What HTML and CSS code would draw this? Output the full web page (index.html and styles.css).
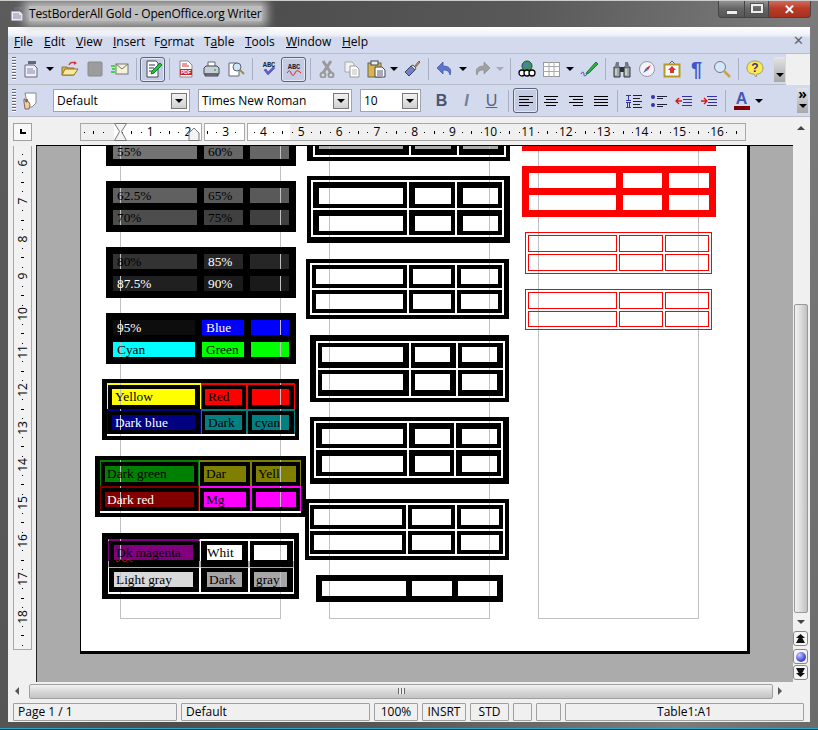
FILE: index.html
```html
<!DOCTYPE html>
<html lang="en">
<head>
    <meta charset="UTF-8">
    <title>TestBorderAll Gold - OpenOffice.org Writer</title>
    <link rel="stylesheet" href="styles.css">
</head>
<body>
<div class="win">
    <!-- title bar -->
    <div class="titlebar">
        <svg class="ticon" width="18" height="18" viewBox="0 0 18 18"><path d="M6 2h8v3H6z" fill="#667"/><path d="M3 6h9l3 3v7H3z" fill="#eef" stroke="#667"/><path d="M5 9h6M5 11h8M5 13h8" stroke="#889"/></svg>
        <span class="ttext">TestBorderAll Gold - OpenOffice.org Writer</span>
        <div class="wbtns">
            <div class="wbtn wmin"><i></i></div>
            <div class="wbtn wmax"><i></i></div>
            <div class="wbtn wclose">✕</div>
        </div>
    </div>

    <div class="client">
        <!-- menu -->
        <div class="menubar">
            <span class="mi w-file"><u>F</u>ile</span>
            <span class="mi w-edit"><u>E</u>dit</span>
            <span class="mi w-view"><u>V</u>iew</span>
            <span class="mi w-insert"><u>I</u>nsert</span>
            <span class="mi w-format">F<u>o</u>rmat</span>
            <span class="mi w-table">T<u>a</u>ble</span>
            <span class="mi w-tools"><u>T</u>ools</span>
            <span class="mi w-window"><u>W</u>indow</span>
            <span class="mi"><u>H</u>elp</span>
            <span class="mclose">✕</span>
        </div>

        <!-- standard toolbar -->
        <div class="toolbar tb1">
            <i class="handle"></i>
            <div class="tb tb-first"><svg width="18" height="18" viewBox="0 0 18 18"><path d="M6 1h8v3H6z" fill="#667"/><path d="M3 5h9l3 3v9H3z" fill="#eef" stroke="#667"/><path d="M5 9h6M5 11h8M5 13h8" stroke="#889"/></svg></div>
            <i class="dd d14"></i>
            <div class="tb"><svg width="18" height="18" viewBox="0 0 18 18"><path d="M1 7h5l1 1h6v7H1z" fill="#d9b64a" stroke="#8a7430"/><path d="M1 15l3-6h13l-4 6z" fill="#fbe99a" stroke="#8a7430"/><path d="M8 5c1-3 4-3 6-2" fill="none" stroke="#d33" stroke-width="1.4"/><path d="M13 1l3 2-3 2z" fill="#d33"/></svg></div>
            <div class="tb"><svg width="18" height="18" viewBox="0 0 18 18"><rect x="2" y="2" width="14" height="14" rx="1" fill="#9c9c9c" stroke="#8a8a8a"/></svg></div>
            <div class="tb"><svg width="18" height="18" viewBox="0 0 18 18"><rect x="5" y="4" width="12" height="10" fill="#f6f2d8" stroke="#777"/><path d="M5 4l6 5 6-5" fill="none" stroke="#777"/><path d="M0 6h4M1 9h3M0 12h4" stroke="#2c2" stroke-width="1.5"/></svg></div>
            <i class="sep"></i>
            <div class="tb on"><svg width="18" height="18" viewBox="0 0 18 18"><path d="M3 1h9l2 2v14H3z" fill="#fff" stroke="#445"/><path d="M5 5h6M5 8h5M5 11h3" stroke="#335"/><path d="M7 14l1-3 8-8 2 2-8 8z" fill="#2c2" stroke="#174"/></svg></div>
            <i class="sep"></i>
            <div class="tb"><svg width="18" height="18" viewBox="0 0 18 18"><path d="M3 1h8l4 4v12H3z" fill="#fff" stroke="#888"/><path d="M5 4h5M5 6h7" stroke="#d33"/><rect x="3" y="9" width="12" height="6" fill="#c22"/><text x="9" y="14" text-anchor="middle" class="svgt pdf">PDF</text></svg></div>
            <div class="tb"><svg width="18" height="18" viewBox="0 0 18 18"><path d="M6 2h7v5H6z" fill="#fff" stroke="#667"/><path d="M2 8l2-2h11l2 2v6H2z" fill="#c9ced8" stroke="#445"/><path d="M3 14h13v2H3z" fill="#889" stroke="#445"/><circle cx="13" cy="10" r="1" fill="#2c2"/></svg></div>
            <div class="tb"><svg width="18" height="18" viewBox="0 0 18 18"><path d="M2 3h8l2 2v11H2z" fill="#fff" stroke="#667"/><circle cx="10" cy="7" r="4" fill="#cfe4f7" stroke="#567"/><path d="M13 10l4 4" stroke="#a84" stroke-width="2"/></svg></div>
            <i class="sep"></i>
            <div class="tb"><svg width="18" height="18" viewBox="0 0 18 18"><text x="9" y="7" text-anchor="middle" class="svgt abc">ABC</text><path d="M4 10l4 5 7-7-2-1-5 5-2-3z" fill="#5a62cc" stroke="#3a3f99" stroke-width=".5"/></svg></div>
            <div class="tb on"><svg width="18" height="18" viewBox="0 0 18 18"><text x="9" y="9" text-anchor="middle" class="svgt abc">ABC</text><path d="M2 13c2-3 3-3 4 0s3 3 4 0 3-3 6 0" fill="none" stroke="#d22"/></svg></div>
            <i class="sep"></i>
            <div class="tb"><svg width="18" height="18" viewBox="0 0 18 18"><path d="M5 1l8 12M13 1L5 13" stroke="#9a9a9a" stroke-width="3"/><circle cx="5" cy="15" r="2.500" fill="none" stroke="#9a9a9a" stroke-width="2"/><circle cx="13" cy="15" r="2.500" fill="none" stroke="#9a9a9a" stroke-width="2"/></svg></div>
            <div class="tb"><svg width="18" height="18" viewBox="0 0 18 18"><path d="M2 2h7l2 2v8H2z" fill="#f2f2f2" stroke="#aaa"/><path d="M7 6h6l3 3v8H7z" fill="#fff" stroke="#999"/><path d="M9 10h5M9 12h5M9 14h5" stroke="#bbb"/></svg></div>
            <div class="tb"><svg width="20" height="18" viewBox="0 0 20 18"><rect x="1" y="3" width="13" height="14" fill="#d9b64a" stroke="#665"/><rect x="4" y="1" width="7" height="4" fill="#eee" stroke="#445"/><path d="M8 7h7l3 3v7H8z" fill="#fff" stroke="#445"/><path d="M10 11h6M10 13h6M10 15h6" stroke="#557"/></svg></div>
            <i class="dd d10"></i>
            <div class="tb"><svg width="18" height="18" viewBox="0 0 18 18"><path d="M11 7l5-6 1 1-5 6z" fill="#c9a24a" stroke="#765"/><path d="M2 12l6-6 4 4-6 6z" fill="#6f7fd0" stroke="#445"/><path d="M8 6l2-1 3 3-1 2z" fill="#ddd" stroke="#555"/></svg></div>
            <i class="sep"></i>
            <div class="tb"><svg width="18" height="18" viewBox="0 0 18 18"><path d="M7 2L1 8l6 6v-4c4 0 6 1 7 5 2-5 0-9-7-9z" fill="#5c74d2" stroke="#3c4c9c" stroke-width=".7"/></svg></div>
            <i class="dd d12"></i>
            <div class="tb"><svg width="18" height="18" viewBox="0 0 18 18"><path d="M11 2l6 6-6 6v-4c-4 0-6 1-7 5-2-5 0-9 7-9z" fill="#a0a0a0" stroke="#8c8c8c" stroke-width=".7"/></svg></div>
            <i class="dd d12 dim"></i>
            <i class="sep"></i>
            <div class="tb"><svg width="18" height="18" viewBox="0 0 18 18"><circle cx="9" cy="6" r="5" fill="#3a9a4a" stroke="#247"/><path d="M6 3l4 1 1 3-3 1z" fill="#57c"/><circle cx="4" cy="13" r="3" fill="#fff" stroke="#000" stroke-width="1.3"/><circle cx="9" cy="13" r="3" fill="#fff" stroke="#000" stroke-width="1.3"/><circle cx="14" cy="13" r="3" fill="#fff" stroke="#000" stroke-width="1.3"/></svg></div>
            <div class="tb"><svg width="17" height="15" viewBox="0 0 17 15"><rect x=".5" y=".5" width="16" height="14" fill="#fff" stroke="#999"/><path d="M0 4.500h17M0 9.500h17M6 0v15M11 0v15" stroke="#aaa"/></svg></div>
            <i class="dd d12"></i>
            <div class="tb"><svg width="18" height="18" viewBox="0 0 18 18"><path d="M1 14c2-4 3-1 3 1s3 0 4-2" fill="none" stroke="#4a3fb0"/><path d="M7 12l9-10 2 2-9 9-3 1z" fill="#2db53c" stroke="#174"/></svg></div>
            <i class="sep"></i>
            <div class="tb"><svg width="18" height="18" viewBox="0 0 18 18"><path d="M2 6l1-4h3v4zM12 6V2h3l1 4z" fill="#778"/><path d="M1 7h6v10H1zM11 7h6v10h-6z" fill="#9aa" stroke="#333"/><rect x="7" y="7" width="4" height="5" fill="#333"/><path d="M3 9v6M13 9v6" stroke="#eee"/></svg></div>
            <div class="tb"><svg width="18" height="18" viewBox="0 0 18 18"><circle cx="9" cy="9" r="7.500" fill="#f4f4f8" stroke="#99a"/><path d="M13 5l-3 5-2-2z" fill="#d22"/><path d="M5 13l3-5 2 2z" fill="#46c"/></svg></div>
            <div class="tb"><svg width="18" height="18" viewBox="0 0 18 18"><path d="M6 4l3-3 3 3" fill="none" stroke="#665"/><rect x="1.500" y="4.500" width="15" height="12" fill="#fff" stroke="#b59a2a" stroke-width="2"/><path d="M5 10l4-4 4 4h-2v3H7v-3z" fill="#d33"/></svg></div>
            <div class="tb"><span class="pil">¶</span></div>
            <div class="tb"><svg width="18" height="18" viewBox="0 0 18 18"><circle cx="7" cy="7" r="5.500" fill="#d5e8fa" stroke="#778"/><path d="M11 11l6 6" stroke="#c9a24a" stroke-width="2.500"/></svg></div>
            <i class="sep"></i>
            <div class="tb"><svg width="18" height="18" viewBox="0 0 18 18"><path d="M9 1c5 0 8 3 8 7s-3 6-6 6l-1 3-2-3c-4 0-7-2-7-6s3-7 8-7z" fill="#ffe94a" stroke="#998"/><text x="9" y="12" text-anchor="middle" class="svgt qm">?</text></svg></div>
            <div class="over over1"><i class="dd d10"></i></div>
        </div>

        <!-- formatting toolbar -->
        <div class="toolbar tb2">
            <i class="handle"></i>
            <div class="tb tb-style"><svg width="18" height="18" viewBox="0 0 18 18"><path d="M4 1h11v10l-4 4H7z" fill="#fff" stroke="#888"/><path d="M3 10V7h1l1 3h1V7l1 3 1 0 1 3-1 4H4z" fill="#f2c9a0" stroke="#543" stroke-width=".7"/></svg></div>
            <div class="combo c-style"><span>Default</span><b class="cbtn"></b></div>
            <div class="combo c-font"><span>Times New Roman</span><b class="cbtn"></b></div>
            <div class="combo c-size"><span>10</span><b class="cbtn"></b></div>
            <div class="tb fmt fb">B</div>
            <div class="tb fmt fi">I</div>
            <div class="tb fmt fu">U</div>
            <i class="sep"></i>
            <div class="tb on al-first"><svg width="18" height="12" viewBox="0 0 18 12"><path d="M2 1.500h14M2 4.500h10M2 7.500h14M2 10.500h10" stroke="#000"/></svg></div>
            <div class="tb"><svg width="18" height="12" viewBox="0 0 18 12"><path d="M2 1.500h14M4 4.500h10M2 7.500h14M4 10.500h10" stroke="#000"/></svg></div>
            <div class="tb"><svg width="18" height="12" viewBox="0 0 18 12"><path d="M2 1.500h14M6 4.500h10M2 7.500h14M6 10.500h10" stroke="#000"/></svg></div>
            <div class="tb"><svg width="18" height="12" viewBox="0 0 18 12"><path d="M2 1.500h14M2 4.500h14M2 7.500h14M2 10.500h14" stroke="#000"/></svg></div>
            <i class="sep"></i>
            <div class="tb"><svg width="18" height="14" viewBox="0 0 18 14"><path d="M1 1.500h5M3.500 1v5M1 6.500h5M1 8.500h5M2.500 8v5M4.500 8v5M1 13.500h5" stroke="#33a"/><path d="M8 1.500h9M8 4.500h7M8 7.500h9M8 10.500h7M8 13.500h9" stroke="#223"/></svg></div>
            <div class="tb"><svg width="18" height="12" viewBox="0 0 18 12"><circle cx="3" cy="2" r="2" fill="#33a"/><circle cx="3" cy="10" r="2" fill="#33a"/><path d="M7 1.500h10M7 3.500h6M7 9.500h10M7 11.500h6" stroke="#223"/></svg></div>
            <div class="tb"><svg width="18" height="14" viewBox="0 0 18 14"><path d="M7 7H1M4 4L1 7l3 3" fill="none" stroke="#d11" stroke-width="1.300"/><path d="M7 2.500h10M8 5.500h9M8 8.500h9M7 11.500h10" stroke="#339"/></svg></div>
            <div class="tb"><svg width="18" height="14" viewBox="0 0 18 14"><path d="M1 7h6M4 4l3 3-3 3" fill="none" stroke="#d11" stroke-width="1.300"/><path d="M7 2.500h10M8 5.500h9M8 8.500h9M7 11.500h10" stroke="#339"/></svg></div>
            <i class="sep"></i>
            <div class="tb fcol"><span class="fa">A</span><i class="fbar"></i></div>
            <i class="dd d10"></i>
            <div class="over over2"><span class="chev">»</span><i class="dd d10"></i></div>
        </div>

        <!-- ruler + document + scrollbar -->
        <div class="editor">
            <div class="rulerrow">
                <div class="tabcorner"><i></i></div>
                <div class="hruler">
                    <div class="track">
                        <span class="u"></span><span class="u"></span>
                        <span class="u"><b>1</b></span><span class="u"><b>2</b></span><span class="u"><b>3</b></span><span class="u"><b>4</b></span>
                        <span class="u"><b>5</b></span><span class="u"><b>6</b></span><span class="u"><b>7</b></span><span class="u"><b>8</b></span>
                        <span class="u"><b>9</b></span><span class="u"><b>10</b></span><span class="u"><b>11</b></span><span class="u"><b>12</b></span>
                        <span class="u"><b>13</b></span><span class="u"><b>14</b></span><span class="u"><b>15</b></span><span class="u"><b>16</b></span>
                    </div>
                    <svg class="hour" width="14" height="18" viewBox="0 0 14 18"><path d="M.5.500h12L7.500 8.500l5 9H.5l5-9z" fill="#f4f4f4" stroke="#777"/></svg>
                    <svg class="tri" width="12" height="18" viewBox="0 0 12 18"><path d="M1 17.500V10l5-5 5 5v7.500z" fill="#f4f4f4" stroke="#777"/></svg>
                    <i class="colsep cs1"></i><i class="colsep cs2"></i>
                </div>
            </div>
            <div class="vscroll">
                <i class="arr up"></i>
                <div class="vthumb"></div>
                <i class="arr down"></i>
                <div class="nav"><i class="na nup"></i></div>
                <div class="nav"><i class="ball"></i></div>
                <div class="nav"><i class="na ndown"></i></div>
            </div>
            <div class="leftpane">
                <div class="vruler">
                    <span class="v"></span><span class="v"><b>6</b></span><span class="v"><b>7</b></span><span class="v"><b>8</b></span>
                    <span class="v"><b>9</b></span><span class="v"><b>10</b></span><span class="v"><b>11</b></span><span class="v"><b>12</b></span>
                    <span class="v"><b>13</b></span><span class="v"><b>14</b></span><span class="v"><b>15</b></span><span class="v"><b>16</b></span>
                    <span class="v"><b>17</b></span><span class="v"><b>18</b></span>
                </div>
            </div>
            <div class="doc">
                <div class="page">

                    <!-- left column: coloured cells -->
                    <div class="col col1">
                        <i class="guide"></i>
                        <div class="tbl shade t1">
                            <div class="grid">
                                <div class="cell g55"><span class="txt">55%</span></div>
                                <div class="cell g60"><span class="txt">60%</span></div>
                                <div class="cell g60"></div>
                            </div>
                        </div>
                        <div class="tbl shade t1">
                            <div class="grid">
                                <div class="cell g62"><span class="txt">62.5%</span></div>
                                <div class="cell g65"><span class="txt">65%</span></div>
                                <div class="cell g65"></div>
                                <div class="cell g70"><span class="txt">70%</span></div>
                                <div class="cell g75"><span class="txt">75%</span></div>
                                <div class="cell g75"></div>
                            </div>
                        </div>
                        <div class="tbl shade t1">
                            <div class="grid">
                                <div class="cell g80"><span class="txt">80%</span></div>
                                <div class="cell g85 lt"><span class="txt">85%</span></div>
                                <div class="cell g85"></div>
                                <div class="cell g87 lt"><span class="txt">87.5%</span></div>
                                <div class="cell g90 lt"><span class="txt">90%</span></div>
                                <div class="cell g90"></div>
                            </div>
                        </div>
                        <div class="tbl shade t4">
                            <div class="grid">
                                <div class="cell g95 lt"><span class="txt">95%</span></div>
                                <div class="cell blue lt"><span class="txt">Blue</span></div>
                                <div class="cell blue"></div>
                                <div class="cell cyan"><span class="txt">Cyan</span></div>
                                <div class="cell green"><span class="txt">Green</span></div>
                                <div class="cell green"></div>
                            </div>
                        </div>
                        <div class="tbl edged t5">
                            <div class="grid">
                                <div class="cell yellow"><span class="txt">Yellow</span></div>
                                <div class="cell red"><span class="txt">Red</span></div>
                                <div class="cell red"></div>
                                <div class="cell navy lt"><span class="txt">Dark blue</span></div>
                                <div class="cell teal"><span class="txt">Dark</span></div>
                                <div class="cell teal"><span class="txt">cyan</span></div>
                            </div>
                        </div>
                        <div class="tbl edged t6">
                            <div class="grid">
                                <div class="cell dgreen"><span class="txt">Dark green</span></div>
                                <div class="cell olive"><span class="txt">Dar</span></div>
                                <div class="cell olive"><span class="txt">Yell</span></div>
                                <div class="cell dred lt"><span class="txt">Dark red</span></div>
                                <div class="cell mag"><span class="txt">Mg</span></div>
                                <div class="cell mag"></div>
                            </div>
                        </div>
                        <div class="tbl edged t7">
                            <div class="grid">
                                <div class="cell purple band"><span class="txt"><em class="squig">Dk</em> magenta</span></div>
                                <div class="cell white band"><span class="txt">Whit</span></div>
                                <div class="cell white band"></div>
                                <div class="cell lgray low"><span class="txt">Light gray</span></div>
                                <div class="cell dgray low"><span class="txt">Dark</span></div>
                                <div class="cell dgray low"><span class="txt">gray</span></div>
                            </div>
                        </div>
                    </div>

                    <!-- middle column: black borders -->
                    <div class="col col2">
                        <i class="guide"></i>
                        <div class="tbl framed m1">
                            <div class="grid">
                                <div class="cell fill"></div><div class="cell fill"></div><div class="cell fill"></div>
                            </div>
                        </div>
                        <div class="tbl framed m2"><div class="grid">
                            <div class="cell"></div><div class="cell"></div><div class="cell"></div>
                            <div class="cell"></div><div class="cell"></div><div class="cell"></div>
                        </div></div>
                        <div class="tbl framed m3 plus1"><div class="grid">
                            <div class="cell"></div><div class="cell"></div><div class="cell"></div>
                            <div class="cell"></div><div class="cell"></div><div class="cell"></div>
                        </div></div>
                        <div class="tbl framed m4 plus1"><div class="grid">
                            <div class="cell"></div><div class="cell"></div><div class="cell"></div>
                            <div class="cell"></div><div class="cell"></div><div class="cell"></div>
                        </div></div>
                        <div class="tbl framed m5"><div class="grid">
                            <div class="cell"></div><div class="cell"></div><div class="cell"></div>
                            <div class="cell"></div><div class="cell"></div><div class="cell"></div>
                        </div></div>
                        <div class="tbl framed m6"><div class="grid">
                            <div class="cell"></div><div class="cell"></div><div class="cell"></div>
                            <div class="cell"></div><div class="cell"></div><div class="cell"></div>
                        </div></div>
                        <div class="tbl m7"><div class="grid">
                            <div class="cell"></div><div class="cell"></div><div class="cell"></div>
                        </div></div>
                    </div>

                    <!-- right column: red borders -->
                    <div class="col col3">
                        <i class="guide"></i>
                        <div class="tbl rthick"><div class="grid">
                            <div class="cell"></div><div class="cell"></div><div class="cell"></div>
                            <div class="cell"></div><div class="cell"></div><div class="cell"></div>
                        </div></div>
                        <div class="tbl rthick"><div class="grid">
                            <div class="cell"></div><div class="cell"></div><div class="cell"></div>
                            <div class="cell"></div><div class="cell"></div><div class="cell"></div>
                        </div></div>
                        <div class="tbl framed rthin"><div class="grid">
                            <div class="cell"></div><div class="cell"></div><div class="cell"></div>
                            <div class="cell"></div><div class="cell"></div><div class="cell"></div>
                        </div></div>
                        <div class="tbl framed rthin r4"><div class="grid">
                            <div class="cell"></div><div class="cell"></div><div class="cell"></div>
                            <div class="cell"></div><div class="cell"></div><div class="cell"></div>
                        </div></div>
                    </div>
                </div>
            </div>
        </div>

        <!-- horizontal scrollbar -->
        <div class="hscroll">
            <i class="arr left"></i>
            <div class="hthumb"><span class="grip"></span></div>
            <i class="arr right"></i>
        </div>

        <!-- status bar -->
        <div class="status">
            <div class="sb s1">Page 1 / 1</div>
            <div class="sb s2">Default</div>
            <div class="sb s3 ctr">100%</div>
            <div class="sb s4 ctr">INSRT</div>
            <div class="sb s5 ctr">STD</div>
            <div class="sb s6"></div>
            <div class="sb s7"></div>
            <div class="sb s8 ctr">Table1:A1</div>
        </div>
    </div>
</div>
</body>
</html>
```

FILE: styles.css
```css
html, body {
    margin: 0;
    padding: 0;
    background: #555;
}
body {
    font-family: "Open Sans", "Noto Sans", sans-serif;
    font-size: 12px;
    color: #000;
    overflow: hidden;
}
i, em {
    font-style: normal;
}

/* window frame */
.win {
    width: 818px;
    height: 730px;
    box-sizing: border-box;
    display: flex;
    flex-direction: column;
    padding: 0 8px 8px;
    background: linear-gradient(100deg, #5c5c5c 0%, #4e4e4e 30%, #585858 55%, #7c7c7c 85%, #6a6a6a 100%);
    border-top: 1px solid #ccc;
    box-shadow: inset 0 -1px 0 #333, inset 0 -2px 0 #2aa6c8;
    overflow: hidden;
}
.titlebar {
    height: 26px;
    flex: none;
    display: flex;
    align-items: center;
    position: relative;
}
.ticon {
    margin: 0 3px 0 0;
}
.ttext {
    font-size: 12px;
    color: #000;
    background: #bdbdbd;
    box-shadow: 0 0 10px 5px #bdbdbd;
    line-height: 15px;
    letter-spacing: -.15px;
    margin-top: -2px;
}
.wbtns {
    position: absolute;
    right: -1px;
    top: -1px;
    display: flex;
    height: 18px;
}
.wbtn {
    height: 17px;
    border: 1px solid #444;
    border-top: 0;
    box-sizing: content-box;
    display: flex;
    align-items: center;
    justify-content: center;
}
.wmin {
    width: 25px;
    border-radius: 0 0 0 4px;
    background: linear-gradient(#999, #666 50%, #555);
}
.wmin i {
    width: 10px;
    height: 3px;
    margin-top: 7px;
    background: #eee;
    border: 1px solid #555;
}
.wmax {
    width: 23px;
    border-left: 0;
    background: linear-gradient(#999, #666 50%, #555);
}
.wmax i {
    width: 8px;
    height: 5px;
    border: 2px solid #eee;
    outline: 1px solid #555;
}
.wclose {
    width: 41px;
    border-left: 0;
    border-radius: 0 0 4px 0;
    color: #fff;
    font-size: 13px;
    font-weight: 700;
    background: linear-gradient(#d87060, #b83c28 50%, #a83020);
}

.client {
    flex: 1;
    display: flex;
    flex-direction: column;
    min-height: 0;
    background: #f0f0f0;
}

/* menu */
.menubar {
    height: 27px;
    flex: none;
    box-sizing: border-box;
    display: flex;
    align-items: center;
    padding: 3px 6px 0;
    background: linear-gradient(#fff 0, #eef1f8 8px, #d3daee 11px);
    border-bottom: 1px solid #b8bcc8;
}
.mi {
    font-size: 12px;
    line-height: 16px;
    flex: none;
}
.w-file { width: 30px; }
.w-edit { width: 32px; }
.w-view { width: 37px; }
.w-insert { width: 41px; }
.w-format { width: 50px; }
.w-table { width: 41px; }
.w-tools { width: 41px; }
.w-window { width: 56px; }
.mclose {
    margin-left: auto;
    font-size: 13px;
    color: #666;
    margin-top: -3px;
}

/* toolbars */
.toolbar {
    flex: none;
    display: flex;
    align-items: center;
    box-sizing: border-box;
    padding-left: 4px;
    background: #d3daee;
    border-bottom: 1px solid #b8bcc8;
}
.tb1 {
    height: 31px;
    width: 778px;
}
.tb2 {
    height: 32px;
}
.handle {
    width: 4px;
    height: 24px;
    flex: none;
    background: repeating-linear-gradient(#667 0 1px, #fff 1px 2px, transparent 2px 3px);
}
.tb {
    width: 25px;
    height: 25px;
    flex: none;
    box-sizing: border-box;
    display: flex;
    align-items: center;
    justify-content: center;
}
.tb-first {
    margin-left: 2px;
}
.tb-style {
    margin-left: 1px;
    margin-right: 11px;
}
.tb.on {
    background: #c3cce2;
    border: 1px solid #5b6478;
    border-radius: 3px;
    box-shadow: inset 0 0 0 1px #e4e8f4;
}
.al-first {
    margin-left: 1px;
}
.sep {
    width: 8px;
    height: 22px;
    flex: none;
    background: linear-gradient(#a9b0c4, #a9b0c4) center / 1px 100% no-repeat;
}
.dd {
    display: block;
    flex: none;
    height: 4px;
    position: relative;
}
.dd::before {
    content: "";
    position: absolute;
    left: 50%;
    top: 0;
    margin-left: -4px;
    border: 4px solid transparent;
    border-top: 4px solid #000;
    border-bottom: 0;
}
.dd.dim::before {
    border-top-color: #aaa;
}
.d10 { width: 10px; }
.d12 { width: 12px; }
.d14 { width: 14px; }
.over {
    margin-left: auto;
    width: 11px;
    height: 25px;
    flex: none;
    background: linear-gradient(#e4e4e4, #a8a8a8);
    display: flex;
    flex-direction: column;
    align-items: center;
    justify-content: flex-end;
    padding-bottom: 5px;
    box-sizing: border-box;
}
.over1 {
    margin-right: 1px;
}
.over2 {
    margin-right: 2px;
    justify-content: space-between;
    padding: 0 0 5px;
}
.chev {
    font-size: 14px;
    line-height: 12px;
    font-weight: 700;
}
.svgt {
    font-family: "Liberation Sans", sans-serif;
}
.pdf {
    font-size: 5px;
    font-weight: 700;
    fill: #fff;
}
.abc {
    font-family: "Liberation Mono", monospace;
    font-size: 7px;
    font-weight: 700;
    fill: #223;
}
.qm {
    font-size: 12px;
    font-weight: 700;
    fill: #338;
}
.pil {
    font-family: "Liberation Sans", sans-serif;
    font-size: 20px;
    font-weight: 700;
    color: #3f57c8;
    line-height: 20px;
}
.fmt {
    font-family: "Liberation Sans", sans-serif;
    font-size: 16px;
    color: #4a5470;
}
.fb {
    font-weight: 700;
}
.fi {
    font-style: italic;
    font-weight: 700;
    color: #777f96;
}
.fu {
    text-decoration: underline;
    color: #5a6480;
}
.fcol {
    flex-direction: column;
}
.fa {
    font-family: "Liberation Sans", sans-serif;
    font-weight: 700;
    font-size: 16px;
    line-height: 15px;
    color: #4755b8;
}
.fbar {
    width: 16px;
    height: 4px;
    background: #800000;
}

/* combo boxes */
.combo {
    height: 23px;
    flex: none;
    box-sizing: border-box;
    background: #fff;
    border: 1px solid #a0a4b0;
    display: flex;
    align-items: center;
    margin-right: 8px;
    padding-left: 3px;
}
.combo span {
    flex: 1;
    font-size: 12px;
}
.c-style { width: 137px; }
.c-font { width: 154px; }
.c-size { width: 61px; }
.cbtn {
    width: 16px;
    height: 16px;
    margin-right: 2px;
    box-sizing: border-box;
    background: linear-gradient(#f2f2f2, #d0d0d0);
    border: 1px solid #777;
    position: relative;
}
.cbtn::before {
    content: "";
    position: absolute;
    left: 3px;
    top: 5px;
    border: 4px solid transparent;
    border-top: 4px solid #000;
    border-bottom: 0;
}

/* editor grid */
.editor {
    height: 565px;
    flex: none;
    display: grid;
    grid-template-columns: 28px 757px 17px;
    grid-template-rows: 28px 537px;
}
.rulerrow {
    grid-column: 1 / 3;
    display: flex;
    align-items: center;
    padding-left: 5px;
    padding-top: 1px;
    background: #f0f0f0;
}
.tabcorner {
    width: 19px;
    height: 18px;
    box-sizing: border-box;
    border: 1px solid #a0a0a0;
    background: #f8f8f8;
    display: flex;
    align-items: center;
    justify-content: center;
}
.tabcorner i {
    width: 6px;
    height: 5px;
    border-left: 2px solid #000;
    border-bottom: 2px solid #000;
    box-sizing: border-box;
}
.hruler {
    position: relative;
    width: 666px;
    height: 18px;
    margin-left: 48px;
}
.track {
    height: 18px;
    box-sizing: border-box;
    border: 1px solid #a8a8a8;
    background: linear-gradient(to right, #f0f0f0 33px, #fff 33px, #fff 209px, #f0f0f0 209px);
    display: flex;
    overflow: hidden;
}
.u {
    width: 37.8px;
    height: 16px;
    flex: none;
    position: relative;
    background:
        linear-gradient(#000, #000) 9.45px 8px / 1px 1px no-repeat,
        linear-gradient(#000, #000) 18.9px 7px / 1px 3px no-repeat,
        linear-gradient(#000, #000) 28.35px 8px / 1px 1px no-repeat;
}
.u:first-child {
    margin-left: -6.5px;
}
.u b {
    position: absolute;
    left: 0;
    top: 0;
    transform: translateX(-50%);
    font-weight: 400;
    font-size: 12px;
    line-height: 16px;
}
.hour {
    position: absolute;
    left: 34px;
    top: 0;
}
.tri {
    position: absolute;
    left: 108px;
    top: 0;
}
.colsep {
    position: absolute;
    top: 0;
    width: 2px;
    height: 18px;
    background: #f0f0f0;
    border-left: 1px solid #aaa;
    border-right: 1px solid #aaa;
}
.cs1 { left: 121px; }
.cs2 { left: 164px; }

.leftpane {
    background: #f0f0f0;
    padding: 1px 0 0 5px;
}
.vruler {
    width: 19px;
    height: 504px;
    box-sizing: border-box;
    border: 1px solid #a8a8a8;
    border-width: 0 1px 1px;
    background: #f2f2f2;
    overflow: hidden;
    display: flex;
    flex-direction: column;
}
.v {
    height: 37.8px;
    width: 17px;
    flex: none;
    position: relative;
    background:
        linear-gradient(#000, #000) 8px 9.45px / 1px 1px no-repeat,
        linear-gradient(#000, #000) 7px 18.9px / 3px 1px no-repeat,
        linear-gradient(#000, #000) 8px 28.35px / 1px 1px no-repeat;
}
.v:first-child {
    margin-top: -20.8px;
}
.v b {
    position: absolute;
    left: 1px;
    top: 0;
    width: 16px;
    font-weight: 400;
    font-size: 12px;
    line-height: 16px;
    writing-mode: vertical-rl;
    transform: translateY(-50%) rotate(180deg);
    text-align: center;
}

/* document area */
.doc {
    border-top: 1px solid #000;
    border-left: 1px solid #222;
    background: #ababab;
    overflow: hidden;
    padding-left: 43px;
    box-sizing: border-box;
}
.page {
    width: 670px;
    height: 554px;
    margin-top: -46px;
    box-sizing: border-box;
    background: #fff;
    border: solid #000;
    border-width: 0 3px 3px 1px;
    padding-left: 39px;
    display: flex;
    gap: 48px;
}
.col {
    position: relative;
    width: 161px;
    height: 519px;
    box-sizing: border-box;
    display: flex;
    flex-direction: column;
    align-items: flex-start;
    gap: 15px;
    flex: none;
}
.col1 { padding-top: 37px; }
.col2 { padding-top: 23px; }
.col3 { padding-top: 0; }
.guide {
    position: absolute;
    inset: 0;
    border: 1px solid #c0c0c0;
    z-index: 1;
}

/* tables: borders sit above the guide, fills below */
.tbl {
    --tw: 3px 4px 4px 3px;
    --cw: 4px 3px 3px 4px;
    --bc: #000;
    position: relative;
    width: max-content;
    flex: none;
    padding: var(--tw);
}
.tbl::after, .cell::after {
    content: "";
    position: absolute;
    inset: 0;
    border-style: solid;
    border-color: var(--bc);
    z-index: 2;
}
.tbl::after {
    border-width: var(--tw);
}
.cell::after {
    border-width: var(--cw);
}
.grid {
    display: grid;
}
.cell {
    position: relative;
    box-sizing: border-box;
    padding: var(--cw);
    background: var(--c, #fff);
    min-width: 0;
}
.txt {
    position: relative;
    z-index: 3;
    display: block;
    font-family: "Liberation Serif", serif;
    font-size: 13.33px;
    line-height: 15px;
    padding-left: 3px;
    white-space: nowrap;
}
.lt { color: #fff; }
.squig {
    text-decoration: underline wavy #f00 1px;
}

.g55 { --c: #737373; }
.g60 { --c: #666; }
.g62 { --c: #606060; }
.g65 { --c: #595959; }
.g70 { --c: #4d4d4d; }
.g75 { --c: #404040; }
.g80 { --c: #333; }
.g85 { --c: #262626; }
.g87 { --c: #202020; }
.g90 { --c: #1a1a1a; }
.g95 { --c: #0d0d0d; }
.blue { --c: #00f; }
.cyan { --c: #0ff; }
.green { --c: #0f0; }
.yellow { --c: #ff0; }
.red { --c: #f00; }
.navy { --c: #000080; }
.teal { --c: #008080; }
.dgreen { --c: #008000; }
.olive { --c: #808000; }
.dred { --c: #800000; }
.mag { --c: #f0f; }
.purple { --c: #800080; }
.white { --c: #fff; }
.lgray { --c: #d9d9d9; }
.dgray { --c: #a6a6a6; }
.fill { --c: #aaa; }

.shade {
    margin-left: -14px;
}
.shade .grid {
    grid-auto-rows: 22px;
}
.shade .txt {
    padding-left: 4px;
}
.t1 .grid { grid-template-columns: 91px 46px 46px; }
.t4 .grid { grid-template-columns: 89px 49px 45px; }

/* cells with a coloured edge round the black border */
.edged .cell {
    border: 1px solid var(--c);
    border-top-width: 2px;
    border-bottom-width: 0;
}
.edged .grid {
    background: #fff;
    padding-bottom: 2px;
}
.t5 {
    --tw: 4px 4px 4px 5px;
    --cw: 4px 5px 4px 4px;
    margin-left: -18px;
}
.t5 .grid {
    grid-template-columns: 94px 46px 48px;
    grid-template-rows: 26px 25px;
}
.t5 .cell:nth-child(3n+2) { --cw: 4px 4px 4px 3px; }
.t6 {
    --tw: 4px 5px 4px 5px;
    --cw: 4px;
    margin-left: -25px;
    margin-top: 1px;
}
.t6 .grid {
    grid-template-columns: 99px 52px 50px;
    grid-template-rows: 26px 25px;
}
.t6 .txt { padding-left: 2px; }
.t7 {
    --tw: 6px 5px 5px 6px;
    --cw: 4px 6px 7px 5px;
    margin-left: -18px;
    margin-top: 1px;
}
.t7 .grid {
    grid-template-columns: 92px 49px 45px;
    grid-template-rows: 28px 25px;
}
.t7 .cell:nth-child(3n) { --cw: 4px 6px 7px 4px; }
.t7 .cell:nth-child(3n+2) { --cw: 4px 6px 7px 6px; }
.t7 .cell.low { --cw: 4px 6px 5px 5px; }
.t7 .cell.low:nth-child(3n) { --cw: 4px 6px 5px 4px; }
.t7 .cell.low:nth-child(3n+2) { --cw: 4px 6px 5px 6px; }
.t7 .band {
    background: linear-gradient(var(--c) 22px, #aaa 22px) border-box;
    border-left-color: transparent;
    border-right-color: transparent;
}
.t7 .low {
    border-color: #fff;
    border-top: 1px solid #aaa;
}
.t7 .txt { padding-left: 2px; }
.t7 .white .txt { padding-left: 0; }

/* white frame round the cell borders */
.framed .grid {
    background: #fff;
    padding: var(--fp, 2px);
    gap: 2px;
}
.plus1 { margin-top: 1px; }
.m1 {
    --tw: 4px 4px 4px 6px;
    --cw: 4px 6px 6px 4px;
    margin-left: -22px;
}
.m1 .grid {
    grid-template-columns: 94px 46px 45px;
    grid-template-rows: 26px;
}
.m2 {
    --tw: 4px 6px 6px 4px;
    --cw: 6px 4px 4px 6px;
    margin-left: -22px;
}
.m2 .grid {
    grid-template-columns: 94px 46px 45px;
    grid-template-rows: 26px 25px;
}
.m3 {
    --tw: 4px 5px 4px 4px;
    --cw: 4px;
    margin-left: -23px;
}
.m3 .grid {
    grid-template-columns: 95px 46px 45px;
    grid-template-rows: 23px 23px;
}
.m4 {
    --tw: 6px 4px 4px 6px;
    --cw: 4px 6px 6px 4px;
    margin-left: -19px;
}
.m4 .grid {
    grid-template-columns: 91px 45px 45px;
    grid-template-rows: 25px 26px;
}
.m5 {
    --tw: 4px 6px 6px 4px;
    --cw: 6px 4px 4px 6px;
    margin-left: -19px;
}
.m5 .grid {
    grid-template-columns: 91px 45px 45px;
    grid-template-rows: 25px 26px;
}
.m6 {
    --tw: 4px;
    --cw: 4px;
    --fp: 2px 2px 2px 1px;
    margin-left: -24px;
}
.m6 .grid {
    grid-template-columns: 96px 47px 46px;
    grid-template-rows: 24px 23px;
}
.m7 {
    --tw: 3px;
    --cw: 3px;
    margin-left: -13px;
}
.m7 .grid {
    grid-template-columns: 90px 46px 45px;
    grid-template-rows: 21px;
}
.rthick {
    --bc: #f00;
    margin-left: -16px;
}
.rthick .grid {
    grid-template-columns: 94px 46px 47px;
    grid-auto-rows: 22px;
}
.rthin {
    --bc: #f00;
    --tw: 1px;
    --cw: 1px;
    margin-left: -13px;
}
.rthin .grid {
    grid-template-columns: 89px 44px 44px;
    grid-template-rows: 17px 17px;
}
.r4 .grid {
    grid-template-rows: 17px 16px;
}

/* scrollbars */
.vscroll {
    grid-column: 3;
    grid-row: 1 / 3;
    background: #f0f0f0;
    display: flex;
    flex-direction: column;
    align-items: center;
    padding-right: 2px;
    box-sizing: border-box;
}
.arr {
    display: block;
    flex: none;
    width: 0;
    height: 0;
}
.arr.up {
    margin-top: 9px;
    border: 4px solid transparent;
    border-top: 0;
    border-bottom: 4px solid #444;
}
.vthumb {
    width: 14px;
    height: 309px;
    flex: none;
    margin-top: 174px;
    box-sizing: border-box;
    border: 1px solid #999;
    border-radius: 2px;
    background: linear-gradient(to right, #f2f2f2, #dcdcdc 50%, #c0c0c0);
}
.arr.down {
    margin-top: 7px;
    border: 4px solid transparent;
    border-bottom: 0;
    border-top: 4px solid #444;
}
.nav {
    width: 15px;
    height: 15px;
    flex: none;
    box-sizing: border-box;
    border: 1px solid #888;
    border-radius: 3px;
    background: #f6f6f6;
    display: flex;
    align-items: center;
    justify-content: center;
    margin-bottom: 1px;
}
.arr.down + .nav {
    margin-top: 7px;
    margin-bottom: 3px;
}
.na {
    width: 9px;
    height: 9px;
    background: #111;
}
.nup {
    clip-path: polygon(50% 0, 100% 45%, 70% 45%, 100% 100%, 0 100%, 30% 45%, 0 45%);
}
.ndown {
    clip-path: polygon(0 0, 100% 0, 70% 55%, 100% 55%, 50% 100%, 0 55%, 30% 55%);
}
.ball {
    width: 10px;
    height: 10px;
    border-radius: 50%;
    background: radial-gradient(circle at 35% 30%, #c8ccff, #4a4fd8 60%, #2a2a90);
}
.hscroll {
    height: 18px;
    flex: none;
    display: flex;
    align-items: center;
    background: #f0f0f0;
}
.arr.left {
    margin-left: 7px;
    border: 4px solid transparent;
    border-left: 0;
    border-right: 4px solid #555;
}
.hthumb {
    width: 744px;
    height: 15px;
    margin-left: 10px;
    flex: none;
    box-sizing: border-box;
    border: 1px solid #a0a0a0;
    border-radius: 2px;
    background: linear-gradient(#f2f2f2, #d8d8d8 50%, #c4c4c4);
    display: flex;
    align-items: center;
    justify-content: center;
}
.grip {
    width: 7px;
    height: 6px;
    background: repeating-linear-gradient(to right, #666 0 1px, #eee 1px 3px);
}
.arr.right {
    margin-left: 5px;
    border: 4px solid transparent;
    border-right: 0;
    border-left: 4px solid #555;
}

/* status bar */
.status {
    height: 22px;
    flex: none;
    box-sizing: border-box;
    display: flex;
    gap: 4px;
    padding: 3px 0 1px 5px;
    background: #f0f0f0;
}
.sb {
    height: 18px;
    flex: none;
    box-sizing: border-box;
    border: 1px solid #a0a0a0;
    border-radius: 1px;
    padding-left: 4px;
    line-height: 16px;
    font-size: 12px;
}
.ctr {
    padding-left: 0;
    text-align: center;
}
.s1 { width: 164px; }
.s2 { width: 189px; }
.s3 { width: 44px; }
.s4 { width: 44px; }
.s5 { width: 39px; }
.s6 { width: 19px; }
.s7 { width: 25px; }
.s8 { width: 239px; }
```
